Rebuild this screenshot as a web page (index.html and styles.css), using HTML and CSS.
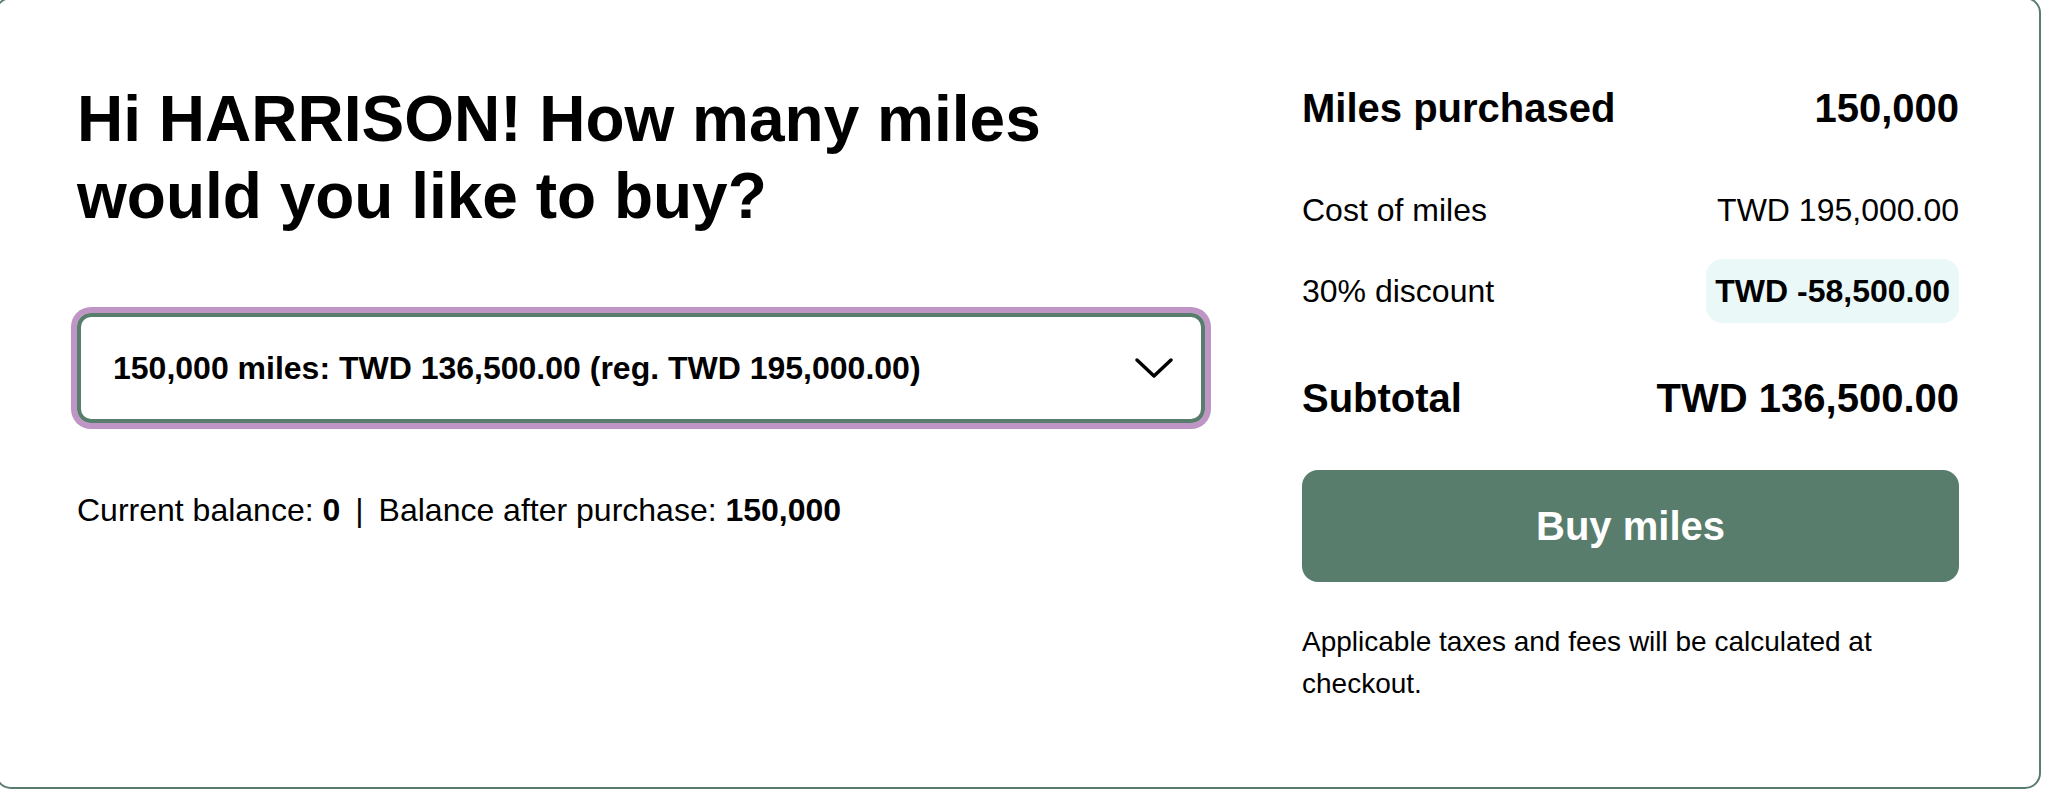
FILE: index.html
```html
<!DOCTYPE html>
<html lang="en">
<head>
    <meta charset="UTF-8">
    <meta name="viewport" content="width=device-width, initial-scale=1.0">
    <title>Buy Miles</title>
    <link rel="stylesheet" href="styles.css">
</head>
<body>
    <div class="purchase-card">
        <div class="purchase-main">
            <h1>Hi HARRISON! How many miles would you like to buy?</h1>

            <div class="miles-select" id="milesSelect">
                <span class="miles-select-text">150,000 miles: TWD 136,500.00 (reg. TWD 195,000.00)</span>
                <svg class="chevron" width="40" height="22" viewBox="0 0 40 22">
                    <polyline points="3,3 20,19 37,3" fill="none" stroke="#000" stroke-width="3.5" stroke-linecap="round" stroke-linejoin="round"/>
                </svg>
            </div>

            <p class="balance">
                Current balance: <strong>0</strong><span class="sep">|</span>Balance after purchase: <strong>150,000</strong>
            </p>
        </div>

        <div class="summary">
            <div class="summary-row summary-head">
                <span>Miles purchased</span>
                <span>150,000</span>
            </div>
            <div class="summary-row summary-cost">
                <span>Cost of miles</span>
                <span>TWD 195,000.00</span>
            </div>
            <div class="summary-row summary-discount">
                <span>30% discount</span>
                <span class="discount-pill">TWD -58,500.00</span>
            </div>
            <div class="summary-row summary-total">
                <span>Subtotal</span>
                <span>TWD 136,500.00</span>
            </div>

            <button class="buy-btn">Buy miles</button>

            <p class="fine-print">Applicable taxes and fees will be calculated at checkout.</p>
        </div>
    </div>
</body>
</html>
```

FILE: styles.css
```css
:root {
    --green: #587d6d;
    --ring: #bf95c5;
    --mint: #eaf8f8;
    --text: #000;
}

* {
    box-sizing: border-box;
    margin: 0;
    padding: 0;
}

body {
    font-family: "Liberation Sans", Arial, Helvetica, sans-serif;
    color: var(--text);
    background: #fff;
    overflow: hidden;
}

.purchase-card {
    width: 2046px;
    height: 792px;
    margin: -3px 0 0 -5px;
    padding: 82px 80px 80px;
    border: 2px solid var(--green);
    border-radius: 16px;
    display: grid;
    grid-template-columns: 1128px 657px;
    column-gap: 97px;
    align-items: start;
}

h1 {
    font-size: 64px;
    line-height: 77px;
    font-weight: bold;
    max-width: 1000px;
}

.miles-select {
    margin-top: 78px;
    height: 110px;
    border: 4px solid var(--green);
    border-radius: 14px;
    box-shadow: 0 0 0 6px var(--ring);
    display: flex;
    align-items: center;
    justify-content: space-between;
    padding: 0 27px 0 32px;
    cursor: pointer;
}

.miles-select-text {
    font-size: 32px;
    font-weight: bold;
}

.chevron {
    display: block;
}

.balance {
    margin-top: 63px;
    font-size: 32px;
    line-height: 48px;
}

.balance strong {
    font-weight: bold;
}

.sep {
    padding: 0 15px;
}

.summary {
    display: flex;
    flex-direction: column;
}

.summary-row {
    display: flex;
    justify-content: space-between;
    align-items: center;
    font-size: 32px;
    line-height: 48px;
}

.summary-head {
    font-size: 40px;
    line-height: 54px;
    font-weight: bold;
}

.summary-cost {
    margin-top: 51px;
}

.summary-discount {
    margin-top: 25px;
}

.discount-pill {
    background: var(--mint);
    font-weight: bold;
    padding: 8px 9px;
    border-radius: 16px;
}

.summary-total {
    margin-top: 51px;
    font-size: 40px;
    font-weight: bold;
}

.buy-btn {
    margin-top: 48px;
    height: 112px;
    border: none;
    border-radius: 16px;
    background: var(--green);
    color: #fff;
    font-family: inherit;
    font-size: 40px;
    font-weight: bold;
    cursor: pointer;
}

.fine-print {
    margin-top: 39px;
    font-size: 28px;
    line-height: 42px;
}
```
